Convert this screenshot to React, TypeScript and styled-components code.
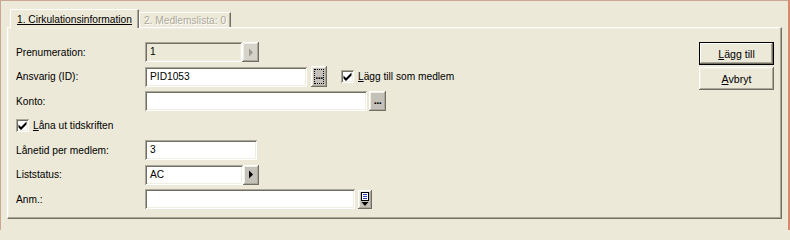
import React from "react";
import styled, { createGlobalStyle, css } from "styled-components";

const GlobalStyle = createGlobalStyle`
  html, body {
    margin: 0;
    padding: 0;
    background: #ece9d8;
  }
  body {
    font-family: "Liberation Sans", Arial, sans-serif;
    font-size: 10.2px;
    color: #000;
  }
`;

const raised = css`
  box-shadow: inset -1px -1px 0 #716f64, inset 1px 1px 0 #ffffff,
    inset -2px -2px 0 #aca899, inset 2px 2px 0 #f1efe2;
`;

const sunken = css`
  box-shadow: inset 1px 1px 0 #aca899, inset -1px -1px 0 #ffffff,
    inset 2px 2px 0 #716f64, inset -2px -2px 0 #f1efe2;
`;

const Frame = styled.div`
  box-sizing: border-box;
  width: 790px;
  height: 230px;
  background: #ece9d8;
  border-top: 1px solid #c9a891;
  border-left: 1px solid #c9a891;
  border-right: 2px solid #d48a6c;
  padding: 7px 7px 0 6px;
  display: flex;
  flex-direction: column;
`;

const TabStrip = styled.div`
  display: flex;
  align-items: flex-end;
  height: 19px;
  padding-left: 3px;
`;

const Tab = styled.div<{ $active?: boolean }>`
  box-sizing: border-box;
  height: ${(p) => (p.$active ? "19px" : "15px")};
  padding: ${(p) => (p.$active ? "4px 6px 0 6px" : "2px 4px 0 4px")};
  border-top: 1px solid #ffffff;
  border-left: 1px solid #ffffff;
  border-right: 1px solid #716f64;
  box-shadow: inset -1px 0 0 #aca899;
  background: #ece9d8;
  white-space: nowrap;
  color: ${(p) => (p.$active ? "#000" : "#aca899")};
  text-shadow: ${(p) => (p.$active ? "none" : "1px 1px 0 #ffffff")};
  text-decoration: ${(p) => (p.$active ? "underline" : "none")};
  position: relative;
  z-index: ${(p) => (p.$active ? 2 : 1)};
  margin-bottom: ${(p) => (p.$active ? "-1px" : "0")};
`;

const Panel = styled.div`
  box-sizing: border-box;
  height: 192px;
  width: 775px;
  border-top: 1px solid #ffffff;
  border-left: 1px solid #ffffff;
  border-right: 1px solid #716f64;
  border-bottom: 1px solid #716f64;
  box-shadow: inset -1px -1px 0 #aca899, inset 1px 1px 0 #f1efe2;
  display: flex;
  justify-content: space-between;
  padding: 12px 7px 0 8px;
`;

const Form = styled.div`
  display: flex;
  flex-direction: column;
`;

const Row = styled.div`
  height: 24.5px;
  display: flex;
  align-items: center;
`;

const Label = styled.span`
  width: 129px;
  flex: none;
  white-space: nowrap;
`;

const Field = styled.div<{ $w: number; $disabled?: boolean }>`
  box-sizing: border-box;
  width: ${(p) => p.$w}px;
  height: 20px;
  background: ${(p) => (p.$disabled ? "#ece9d8" : "#ffffff")};
  ${sunken};
  padding: 4px 0 0 5px;
  white-space: nowrap;
`;

const SmallButton = styled.div<{ $gap: number; $w?: number; $h?: number; $face?: string }>`
  box-sizing: border-box;
  width: ${(p) => p.$w ?? 17}px;
  height: ${(p) => p.$h ?? 20}px;
  margin-left: ${(p) => p.$gap}px;
  background: ${(p) => p.$face ?? "#c3c1ba"};
  ${raised};
  display: flex;
  align-items: center;
  justify-content: center;
  position: relative;
`;

const FocusRing = styled.div`
  position: absolute;
  inset: 3px;
  border: 1px dotted #000;
`;

const Dots = styled.span`
  font-weight: bold;
  font-size: 11px;
  letter-spacing: -0.5px;
  line-height: 1;
  margin-top: -2px;
`;

const CheckWrap = styled.label<{ $ml?: number }>`
  display: flex;
  align-items: center;
  margin-left: ${(p) => p.$ml ?? 0}px;
  white-space: nowrap;
`;

const CheckBox = styled.div`
  box-sizing: border-box;
  width: 13px;
  height: 13px;
  background: #ffffff;
  ${sunken};
  margin-right: 4px;
  display: flex;
  align-items: center;
  justify-content: center;
`;

const Mn = styled.span`
  text-decoration: underline;
`;

const Side = styled.div`
  display: flex;
  flex-direction: column;
  gap: 2px;
  padding-top: 2px;
`;

const PushButton = styled.div<{ $default?: boolean }>`
  box-sizing: border-box;
  width: 75px;
  height: 23px;
  background: #ece9d8;
  display: flex;
  align-items: center;
  justify-content: center;
  font-size: 10.6px;
  ${(p) =>
    p.$default
      ? css`
          border: 1px solid #000;
          box-shadow: inset -1px -1px 0 #716f64, inset 1px 1px 0 #ffffff,
            inset -2px -2px 0 #aca899;
        `
      : css`
          box-shadow: inset -1px -1px 0 #716f64, inset 1px 1px 0 #ffffff,
            inset -2px -2px 0 #aca899, inset 2px 2px 0 #f1efe2;
        `}
`;

const Check = () => (
  <svg width="9" height="9" viewBox="0 0 9 9">
    <path d="M0.5 3.5 L3 6 L8.5 0.5 L8.5 3.5 L3 9 L0.5 6.5 Z" fill="#000" />
  </svg>
);

const Arrow = ({ color }: { color: string }) => (
  <svg width="6" height="9" viewBox="0 0 6 9">
    <path d="M1 0.5 L5 4.5 L1 8.5 Z" fill={color} />
  </svg>
);

const MemoIcon = () => (
  <svg width="10" height="15" viewBox="0 0 10 15">
    <rect x="1.5" y="0.5" width="7" height="8" fill="#fff" stroke="#000" />
    <rect x="3" y="2" width="4" height="1" fill="#2a3cc0" />
    <rect x="3" y="4" width="4" height="1" fill="#2a3cc0" />
    <rect x="3" y="6" width="4" height="1" fill="#2a3cc0" />
    <path d="M1.5 10 L8.5 10 L5 14 Z" fill="#000" />
  </svg>
);

export default function App() {
  return (
    <>
      <GlobalStyle />
      <Frame>
        <TabStrip>
          <Tab $active>1. Cirkulationsinformation</Tab>
          <Tab>2. Medlemslista: 0</Tab>
        </TabStrip>
        <Panel>
          <Form>
            <Row>
              <Label>Prenumeration:</Label>
              <Field $w={97} $disabled>
                1
              </Field>
              <SmallButton $gap={0} $w={17} $face="#d6d3cb">
                <Arrow color="#9d9a90" />
              </SmallButton>
            </Row>
            <Row>
              <Label>Ansvarig (ID):</Label>
              <Field $w={162}>PID1053</Field>
              <SmallButton $gap={4} $w={16} $h={21}>
                <FocusRing />
                <Dots>...</Dots>
              </SmallButton>
              <CheckWrap $ml={14}>
                <CheckBox>
                  <Check />
                </CheckBox>
                <span>
                  <Mn>L</Mn>ägg till som medlem
                </span>
              </CheckWrap>
            </Row>
            <Row>
              <Label>Konto:</Label>
              <Field $w={222}>{""}</Field>
              <SmallButton $gap={2} $w={17} $h={20}>
                <Dots>...</Dots>
              </SmallButton>
            </Row>
            <Row>
              <CheckWrap>
                <CheckBox>
                  <Check />
                </CheckBox>
                <span>
                  <Mn>L</Mn>åna ut tidskriften
                </span>
              </CheckWrap>
            </Row>
            <Row>
              <Label>Lånetid per medlem:</Label>
              <Field $w={112}>3</Field>
            </Row>
            <Row>
              <Label>Liststatus:</Label>
              <Field $w={98}>AC</Field>
              <SmallButton $gap={0} $w={16}>
                <Arrow color="#000" />
              </SmallButton>
            </Row>
            <Row>
              <Label>Anm.:</Label>
              <Field $w={210}>{""}</Field>
              <SmallButton $gap={3} $w={14} $h={19}>
                <MemoIcon />
              </SmallButton>
            </Row>
          </Form>
          <Side>
            <PushButton $default>
              <span>
                <Mn>L</Mn>ägg till
              </span>
            </PushButton>
            <PushButton>
              <span>
                <Mn>A</Mn>vbryt
              </span>
            </PushButton>
          </Side>
        </Panel>
      </Frame>
    </>
  );
}
